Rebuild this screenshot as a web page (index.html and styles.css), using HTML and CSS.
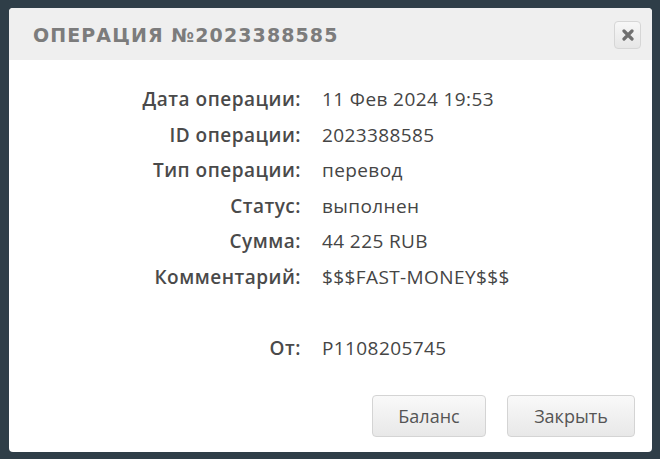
FILE: index.html
```html
<!DOCTYPE html>
<html>
  <head>
    <title>Операция №2023388585</title>
    <link rel="stylesheet" href="styles.css">
  </head>
  <body>
    <div class="dialog">
      <div class="dialog-header">
        <span class="dialog-title">Операция №2023388585</span>
        <button class="close-btn" type="button" aria-label="Закрыть">
          <svg width="12" height="12" viewBox="0 0 12 12">
            <path d="M2 2 L10 10 M10 2 L2 10" stroke="#6f6f6f" stroke-width="3.2" stroke-linecap="round" />
          </svg>
        </button>
      </div>

      <div class="dialog-body">
        <div class="details">
          <div class="label">Дата операции:</div>
          <div class="value">11 Фев 2024 19:53</div>

          <div class="label">ID операции:</div>
          <div class="value">2023388585</div>

          <div class="label">Тип операции:</div>
          <div class="value">перевод</div>

          <div class="label">Статус:</div>
          <div class="value">выполнен</div>

          <div class="label">Сумма:</div>
          <div class="value">44 225 RUB</div>

          <div class="label">Комментарий:</div>
          <div class="value">$$$FAST-MONEY$$$</div>

          <div class="label spacer"></div>
          <div class="value spacer"></div>

          <div class="label">От:</div>
          <div class="value">P1108205745</div>
        </div>
      </div>

      <div class="dialog-footer">
        <button class="btn btn-balance" type="button">Баланс</button>
        <button class="btn btn-close" type="button">Закрыть</button>
      </div>
    </div>
  </body>
</html>
```

FILE: styles.css
```css
body {
  margin: 0;
  padding: 8px 8px 7px 9px;
  background-color: #2f3e48;
  font-family: "Open Sans", Arial, sans-serif;
}

.dialog {
  width: 643px;
  height: 444px;
  background-color: #fff;
  border-radius: 4px;
  display: flex;
  flex-direction: column;
  overflow: hidden;
}

.dialog-header {
  height: 52px;
  background-color: #efefef;
  display: flex;
  align-items: center;
  justify-content: space-between;
  padding: 0 11px 0 24px;
}

.dialog-title {
  font-family: "DejaVu Sans", sans-serif;
  font-size: 19px;
  font-weight: bold;
  text-transform: uppercase;
  letter-spacing: 1.1px;
  color: #7c7c7c;
  margin-top: 1px;
}

.close-btn {
  width: 27px;
  height: 28px;
  padding: 0;
  border: 1px solid #d6d6d6;
  border-radius: 4px;
  background: linear-gradient(#f7f7f7, #e6e6e6);
  display: flex;
  align-items: center;
  justify-content: center;
  margin-top: 1px;
}

.dialog-body {
  padding-top: 22px;
}

.details {
  display: grid;
  grid-template-columns: 292px auto;
  column-gap: 21px;
  font-size: 19px;
  line-height: 35.5px;
}

.label {
  text-align: right;
  font-weight: 600;
  letter-spacing: 0.5px;
  color: #4a4a4a;
}

.value {
  letter-spacing: 0.4px;
  color: #454545;
}

.spacer {
  height: 36px;
}

.dialog-footer {
  margin-top: auto;
  display: flex;
  justify-content: flex-end;
  gap: 21px;
  padding: 0 17px 15px 0;
}

.btn {
  height: 42px;
  padding: 0;
  border: 1px solid #d4d4d4;
  border-radius: 4px;
  background: linear-gradient(#f9f9f9, #e8e8e8);
  font-family: "Open Sans", Arial, sans-serif;
  font-size: 18px;
  color: #555;
  cursor: pointer;
}

.btn-balance {
  width: 114px;
}

.btn-close {
  width: 128px;
}
```
